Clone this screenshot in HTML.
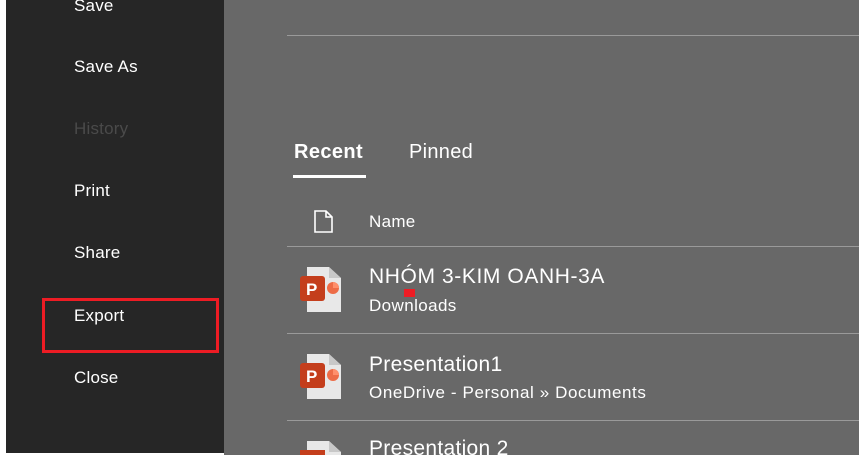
<!DOCTYPE html>
<html style="overflow:hidden;height:455px"><head><meta charset="utf-8"><style>
body{margin:0;width:859px;height:455px;overflow:hidden;background:#fff;font-family:"Segoe UI","Liberation Sans",sans-serif}
#w{position:relative;width:859px;height:455px;overflow:hidden}
.side{position:absolute;left:6px;top:0;width:218px;height:453px;background:#262626}
.main{position:absolute;left:224px;top:0;right:0;height:455px;background:#686868}
.t{position:absolute;color:#fff;white-space:nowrap}
.m{left:74px;font-size:17px;letter-spacing:0.2px}
.hl{position:absolute;left:287px;right:0;height:1px;background:#9a9a9a}
.ic{position:absolute;left:300px;width:42px;height:46px}
</style></head><body><div id="w">
<div class="side"></div>
<div class="main"></div>
<div class="t m" style="top:-4px">Save</div>
<div class="t m" style="top:57px">Save As</div>
<div class="t m" style="top:119px;color:#4a4a4a">History</div>
<div class="t m" style="top:181px">Print</div>
<div class="t m" style="top:243px">Share</div>
<div class="t m" style="top:306px">Export</div>
<div class="t m" style="top:368px">Close</div>
<div style="position:absolute;left:42px;top:298px;width:171px;height:49px;border:3px solid #ed1c24"></div>
<div class="hl" style="top:35px"></div>
<div class="t" style="left:294px;top:141px;font-size:20px;font-weight:bold;letter-spacing:0.4px">Recent</div>
<div style="position:absolute;left:293px;top:175px;width:73px;height:3px;background:#fff"></div>
<div class="t" style="left:409px;top:141px;font-size:20px;letter-spacing:0.3px">Pinned</div>
<svg style="position:absolute;left:313px;top:209px" width="22" height="26"><path d="M2 2H13L19 8V23H2Z M13 2V8H19" fill="none" stroke="#fff" stroke-width="1.6"/></svg>
<div class="t" style="left:369px;top:212px;font-size:17px;letter-spacing:0.3px">Name</div>
<div class="hl" style="top:246px"></div>
<svg class="ic" style="top:266px" viewBox="0 0 42 46"><path d="M7 1H29L41 12V46H7Z" fill="#e8e8e8"/><path d="M29 1V12H41" fill="#c8c8c8"/><rect x="0" y="10" width="25" height="25" rx="3" fill="#c43e1c"/><text x="6" y="29" font-size="17" font-weight="bold" fill="#fff" font-family="Liberation Sans">P</text><circle cx="33" cy="22" r="6" fill="#ed6c47"/><path d="M33 16V22H39A6 6 0 0 0 33 16Z" fill="#ff8f6b"/></svg>
<div class="t" style="left:369px;top:265px;font-size:21px;letter-spacing:0.6px">NHÓM 3-KIM OANH-3A</div>
<div style="position:absolute;left:404px;top:289px;width:11px;height:8px;background:#ed1c24"></div>
<div class="t" style="left:369px;top:296px;font-size:17px;letter-spacing:0.4px">Downloads</div>
<div class="hl" style="top:333px"></div>
<svg class="ic" style="top:353px" viewBox="0 0 42 46"><path d="M7 1H29L41 12V46H7Z" fill="#e8e8e8"/><path d="M29 1V12H41" fill="#c8c8c8"/><rect x="0" y="10" width="25" height="25" rx="3" fill="#c43e1c"/><text x="6" y="29" font-size="17" font-weight="bold" fill="#fff" font-family="Liberation Sans">P</text><circle cx="33" cy="22" r="6" fill="#ed6c47"/><path d="M33 16V22H39A6 6 0 0 0 33 16Z" fill="#ff8f6b"/></svg>
<div class="t" style="left:369px;top:353px;font-size:21px;letter-spacing:0.3px">Presentation1</div>
<div class="t" style="left:369px;top:383px;font-size:17px;letter-spacing:0.6px">OneDrive - Personal » Documents</div>
<div class="hl" style="top:420px"></div>
<svg style="position:absolute;left:300px;top:440px;width:42px;height:15px" viewBox="0 0 42 15"><path d="M7 1H29L41 12V15H7Z" fill="#e8e8e8"/><path d="M29 1V12H41" fill="#c8c8c8"/><rect x="0" y="10" width="25" height="5" fill="#c43e1c"/></svg>
<div class="t" style="left:369px;top:437px;font-size:21px;line-height:24px;height:18px;overflow:hidden;letter-spacing:0.3px">Presentation 2</div>
</div></body></html>
